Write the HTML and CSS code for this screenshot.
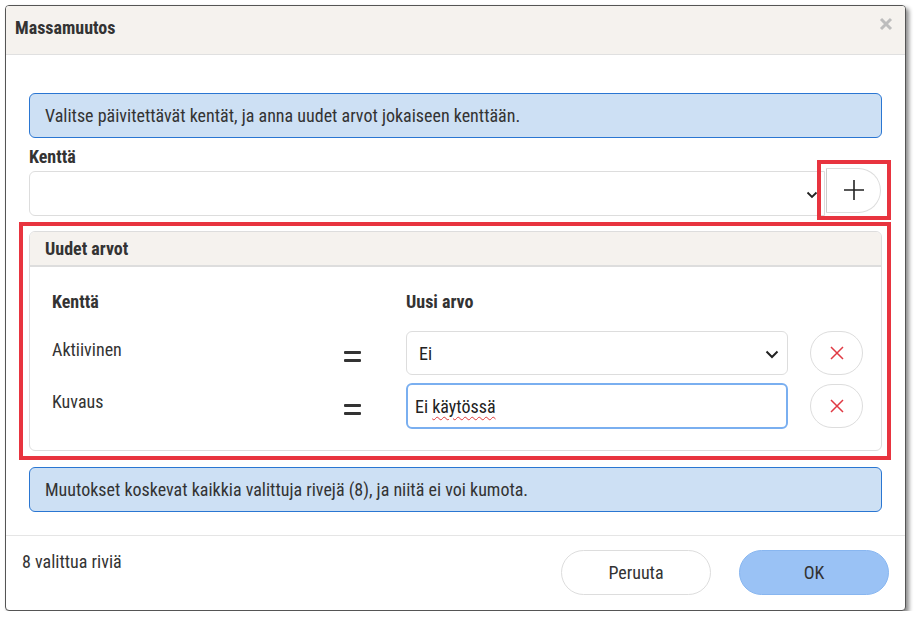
FILE: index.html
```html
<!DOCTYPE html>
<html lang="fi">
<head>
<meta charset="utf-8">
<title>Massamuutos</title>
<link rel="stylesheet" href="styles.css">
</head>
<body>
<div class="dialog">
  <div class="dlg-header">
    <h1 class="dlg-title">Massamuutos</h1>
    <svg class="dlg-close" width="14" height="14" viewBox="0 0 14 14"><path d="M2 2 L12 12 M12 2 L2 12" stroke="#bdbdbd" stroke-width="3"/></svg>
  </div>
  <div class="dlg-body">
    <div class="info">Valitse päivitettävät kentät, ja anna uudet arvot jokaiseen kenttään.</div>
    <label class="field-label">Kenttä</label>
    <div class="field-row">
      <div class="select main-select">
        <span class="select-text"></span>
        <svg class="chev" width="12" height="8" viewBox="0 0 12 8"><path d="M1.5 1.5 L6 6 L10.5 1.5" fill="none" stroke="#222" stroke-width="1.8"/></svg>
      </div>
      <div class="hl hl-add">
        <button class="add-btn"><svg width="22" height="22" viewBox="0 0 22 22"><path d="M11 1 V21 M1 11 H21" stroke="#222" stroke-width="1.6"/></svg></button>
      </div>
    </div>
    <div class="hl hl-panel">
      <div class="panel">
        <div class="panel-head">Uudet arvot</div>
        <div class="panel-body">
          <div class="grid">
            <div class="col-h">Kenttä</div>
            <div></div>
            <div class="col-h">Uusi arvo</div>
            <div></div>

            <div class="name">Aktiivinen</div>
            <div class="eq"><span></span><span></span></div>
            <div class="select row-select">
              <span class="select-text">Ei</span>
              <svg class="chev" width="14" height="9" viewBox="0 0 14 9"><path d="M1.5 1.5 L7 7 L12.5 1.5" fill="none" stroke="#222" stroke-width="2"/></svg>
            </div>
            <button class="del-btn"><svg width="16" height="16" viewBox="0 0 16 16"><path d="M2 2 L14 14 M14 2 L2 14" stroke="#e03a44" stroke-width="1.5"/></svg></button>

            <div class="name">Kuvaus</div>
            <div class="eq"><span></span><span></span></div>
            <div class="input focus"><span class="typed">Ei <span class="spell">käytössä</span></span></div>
            <button class="del-btn"><svg width="16" height="16" viewBox="0 0 16 16"><path d="M2 2 L14 14 M14 2 L2 14" stroke="#e03a44" stroke-width="1.5"/></svg></button>
          </div>
        </div>
      </div>
    </div>
    <div class="info info-2">Muutokset koskevat kaikkia valittuja rivejä (8), ja niitä ei voi kumota.</div>
  </div>
  <div class="dlg-footer">
    <span class="count">8 valittua riviä</span>
    <div class="actions">
      <button class="btn btn-cancel">Peruuta</button>
      <button class="btn btn-ok">OK</button>
    </div>
  </div>
</div>
</body>
</html>
```

FILE: styles.css
```css
* { box-sizing: border-box; }
html, body { margin: 0; padding: 0; background: #ffffff; }
body {
  font-family: "Roboto", "Liberation Sans", sans-serif;
  font-stretch: 85%;
  color: #333;
  font-size: 18px;
  line-height: 22px;
  padding: 5px 0 0 5px;
}
.dialog {
  width: 901px;
  height: 606px;
  background: #fff;
  border: 1px solid #555;
  border-radius: 4px;
  box-shadow: 3px 3px 4px rgba(0,0,0,0.45);
  display: flex;
  flex-direction: column;
  overflow: hidden;
}
.dlg-header {
  height: 49px;
  background: #f5f2ee;
  border-bottom: 1px solid #e0e0e0;
  display: flex;
  align-items: center;
  justify-content: space-between;
  padding: 0 12px 5px 9px;
}
.dlg-title {
  margin: 0;
  font-size: 18px;
  line-height: 22px;
  font-weight: 700;
  color: #333;
}
.dlg-close {
  margin-top: -7px;
}
.dlg-body {
  padding: 38px 23px 0 23px;
  display: flex;
  flex-direction: column;
}
.info {
  height: 45px;
  background: #cde0f4;
  border: 1px solid #2a76d2;
  border-radius: 6px;
  display: flex;
  align-items: center;
  padding: 0 15px;
  color: #333;
}
.field-label {
  display: block;
  font-weight: 700;
  margin-top: 8px;
  color: #333;
}
.field-row {
  display: flex;
  align-items: center;
  margin-top: 3px;
  height: 45px;
}
.select {
  border: 1px solid #ddd;
  border-radius: 6px;
  display: flex;
  align-items: center;
  justify-content: space-between;
  background: #fff;
}
.main-select {
  flex: 1;
  height: 45px;
  border-radius: 6px 0 0 6px;
  padding: 2px 6px 0 12px;
}
.hl {
  border: 4px solid #e8343f;
}
.hl-add {
  width: 74px;
  height: 60px;
  margin: -8px -9px 0 -8px;
  padding: 4px 5px 2px 5px;
  position: relative;
  z-index: 1;
}
.add-btn {
  width: 55px;
  height: 45px;
  border: 1px solid #ddd;
  border-left: 1px solid #ccc;
  border-radius: 0 23px 23px 0;
  background: #fff;
  display: flex;
  align-items: center;
  justify-content: center;
  padding: 0;
}
.hl-panel {
  margin: 6px -9px 0 -10px;
  padding: 5px 5px 5px 6px;
  height: 238px;
}
.panel {
  border: 1px solid #ddd;
  border-radius: 6px;
  height: 220px;
  overflow: hidden;
}
.panel-head {
  height: 35px;
  background: #f5f2ee;
  border-bottom: 2px solid #ddd;
  font-weight: 700;
  display: flex;
  align-items: center;
  padding: 0 15px;
}
.panel-body {
  padding: 24px 17px 0 22px;
}
.grid {
  display: grid;
  grid-template-columns: 280px 74px 382px 76px;
  grid-template-rows: 32px 44px 46px;
  row-gap: 8px;
  align-items: center;
}
.col-h {
  font-weight: 700;
  align-self: start;
}
.name {
  align-self: start;
  padding-top: 8px;
}
.eq {
  display: flex;
  flex-direction: column;
  gap: 5px;
  width: 17px;
  margin-left: 12px;
  margin-top: 6px;
}
.eq span {
  display: block;
  height: 3px;
  background: #333;
  border-radius: 1px;
}
.row-select {
  height: 44px;
  padding: 2px 8px 0 12px;
  color: #222;
}
.input {
  height: 46px;
  border: 2px solid #7aaff0;
  border-radius: 6px;
  display: flex;
  align-items: center;
  padding: 2px 8px 0 7px;
  color: #222;
}
.spell {
  text-decoration: underline wavy #e03a3a;
  text-decoration-thickness: 1px;
  text-underline-offset: 3px;
}
.del-btn {
  width: 53px;
  height: 44px;
  border: 1px solid #ddd;
  border-radius: 22px;
  background: #fff;
  display: flex;
  align-items: center;
  justify-content: center;
  padding: 0;
  justify-self: end;
  margin-right: 1px;
}
.info-2 {
  margin-top: 7px;
}
.dlg-footer {
  margin-top: 23px;
  border-top: 1px solid #e5e5e5;
  flex: 1;
  display: flex;
  justify-content: space-between;
  align-items: flex-start;
  padding: 14px 16px 0 16px;
}
.count {
  margin-top: 1px;
}
.actions {
  display: flex;
  gap: 28px;
}
.btn {
  width: 150px;
  height: 45px;
  border-radius: 23px;
  font-family: inherit;
  font-stretch: inherit;
  font-size: 18px;
  color: #333;
}
.btn-cancel {
  background: #fff;
  border: 1px solid #ddd;
}
.btn-ok {
  background: #9ac2f5;
  border: 1px solid #88b6f0;
}
```
